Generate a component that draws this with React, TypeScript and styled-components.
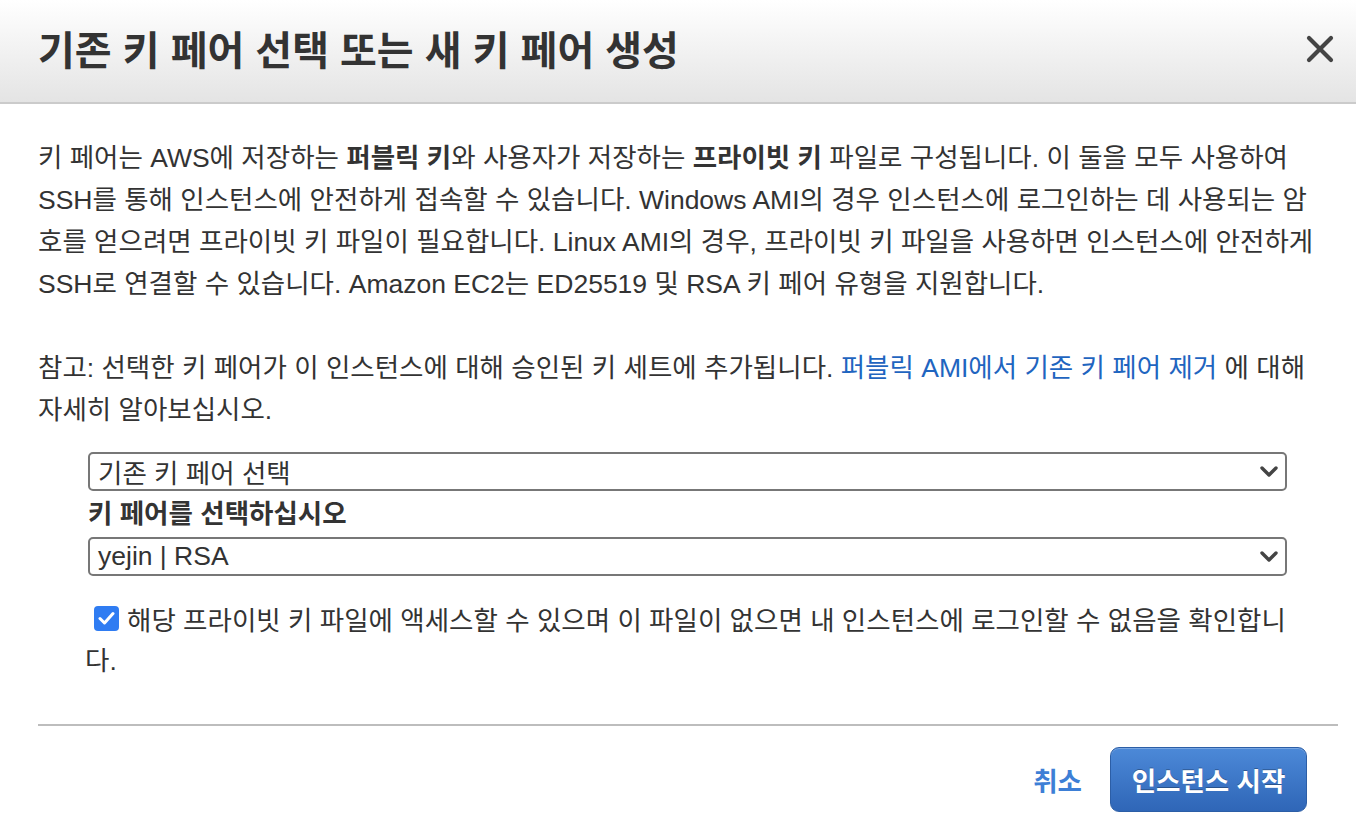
import styled, { createGlobalStyle } from 'styled-components'

const GlobalStyle = createGlobalStyle`
  html, body {
    margin: 0;
    padding: 0;
    background: #fff;
  }
  body {
    font-family: "Liberation Sans", "Noto Sans CJK KR", sans-serif;
    color: #333;
  }
`

const Chevron = () => (
  <svg width="20" height="14" viewBox="0 0 20 14">
    <path d="M3 3 L10 10 L17 3" fill="none" stroke="#444" strokeWidth="3.4" strokeLinecap="round" strokeLinejoin="round" />
  </svg>
)

const SelectBox = ({ value }: { value: string }) => (
  <Select>
    <SelectValue>{value}</SelectValue>
    <Chevron />
  </Select>
)

export default function App() {
  return (
    <>
      <GlobalStyle />
      <Modal>
        <Header>
          <Title>기존 키 페어 선택 또는 새 키 페어 생성</Title>
          <CloseButton aria-label="닫기">
            <svg width="28" height="28" viewBox="0 0 28 28">
              <path d="M3 3 L25 25 M25 3 L3 25" stroke="#444" strokeWidth="4.2" strokeLinecap="round" />
            </svg>
          </CloseButton>
        </Header>
        <Body>
          <Para>
            <Line>키 페어는 AWS에 저장하는 <b>퍼블릭 키</b>와 사용자가 저장하는 <b>프라이빗 키</b> 파일로 구성됩니다. 이 둘을 모두 사용하여</Line>
            <Line>SSH를 통해 인스턴스에 안전하게 접속할 수 있습니다. Windows AMI의 경우 인스턴스에 로그인하는 데 사용되는 암</Line>
            <Line>호를 얻으려면 프라이빗 키 파일이 필요합니다. Linux AMI의 경우, 프라이빗 키 파일을 사용하면 인스턴스에 안전하게</Line>
            <Line>SSH로 연결할 수 있습니다. Amazon EC2는 ED25519 및 RSA 키 페어 유형을 지원합니다.</Line>
          </Para>
          <Para>
            <Line>참고: 선택한 키 페어가 이 인스턴스에 대해 승인된 키 세트에 추가됩니다. <TextLink href="#">퍼블릭 AMI에서 기존 키 페어 제거</TextLink> 에 대해</Line>
            <Line>자세히 알아보십시오.</Line>
          </Para>
          <Fields>
            <SelectBox value="기존 키 페어 선택" />
            <FieldLabel>키 페어를 선택하십시오</FieldLabel>
            <SelectBox value="yejin | RSA" />
          </Fields>
          <Ack>
            <CheckBox>
              <svg width="17" height="14" viewBox="0 0 17 14">
                <path d="M2 7.5 L6.5 12 L15 2.5" fill="none" stroke="#fff" strokeWidth="3" strokeLinecap="round" strokeLinejoin="round" />
              </svg>
            </CheckBox>
            해당 프라이빗 키 파일에 액세스할 수 있으며 이 파일이 없으면 내 인스턴스에 로그인할 수 없음을 확인합니<br />다.
          </Ack>
          <Divider />
          <Footer>
            <CancelLink href="#">취소</CancelLink>
            <PrimaryButton>인스턴스 시작</PrimaryButton>
          </Footer>
        </Body>
      </Modal>
    </>
  )
}

const Modal = styled.div`
  width: 1356px;
  height: 834px;
  background: #fff;
  overflow: hidden;
`

const Header = styled.div`
  height: 102px;
  border-bottom: 2px solid #cbcbcb;
  background: linear-gradient(#ffffff, #e4e4e4);
  display: flex;
  align-items: center;
  justify-content: space-between;
  padding: 0 22px 0 38px;
`

const Title = styled.h1`
  margin: -6px 0 0;
  font-size: 40px;
  font-weight: 700;
  color: #333;
`

const CloseButton = styled.button`
  border: 0;
  background: none;
  padding: 0;
  width: 28px;
  height: 28px;
  margin-top: -4px;
  display: flex;
`

const Body = styled.div`
  padding: 33px 18px 0 38px;
`

const Para = styled.p`
  margin: 0 0 42px;
  font-size: 26.5px;
  line-height: 42px;
  color: #333;
  &:last-of-type {
    margin-bottom: 21px;
  }
  b {
    font-weight: 700;
  }
`

const Line = styled.span`
  display: block;
  white-space: nowrap;
`

const TextLink = styled.a`
  color: #1f65c0;
  text-decoration: none;
`

const Fields = styled.div`
  padding: 0 51px 0 50px;
  display: flex;
  flex-direction: column;
`

const Select = styled.div`
  height: 35px;
  border: 2px solid #777;
  border-radius: 5px;
  display: flex;
  align-items: center;
  justify-content: space-between;
  padding: 0 6px 0 8px;
  background: #fff;
`

const SelectValue = styled.span`
  font-size: 26.5px;
  color: #333;
`

const FieldLabel = styled.div`
  font-size: 26.5px;
  font-weight: 700;
  line-height: 46px;
  color: #333;
`

const Ack = styled.div`
  margin: 25px 47px 0 47px;
  font-size: 26.5px;
  line-height: 40px;
  color: #333;
`

const CheckBox = styled.span`
  display: inline-flex;
  align-items: center;
  justify-content: center;
  width: 25px;
  height: 25px;
  margin: 0 8px 0 9px;
  border-radius: 4px;
  background: #2f7cf2;
  vertical-align: 5px;
`

const Divider = styled.div`
  height: 2px;
  background: #bdbdbd;
  margin-top: 43px;
`

const Footer = styled.div`
  display: flex;
  justify-content: flex-end;
  align-items: center;
  gap: 28px;
  padding: 21px 31px 0 0;
`

const CancelLink = styled.a`
  font-size: 26.5px;
  font-weight: 700;
  color: #3d7fd6;
  text-decoration: none;
`

const PrimaryButton = styled.button`
  width: 197px;
  height: 65px;
  border: 1px solid #2c5ea6;
  border-radius: 9px;
  background: linear-gradient(#4c89d8, #2f66b7);
  box-shadow: inset 0 1px 0 rgba(255, 255, 255, 0.25);
  color: #fff;
  font-family: "Liberation Sans", "Noto Sans CJK KR", sans-serif;
  font-size: 26.5px;
  font-weight: 700;
  text-shadow: 0 -1px 0 rgba(0, 0, 0, 0.3);
  cursor: pointer;
`
